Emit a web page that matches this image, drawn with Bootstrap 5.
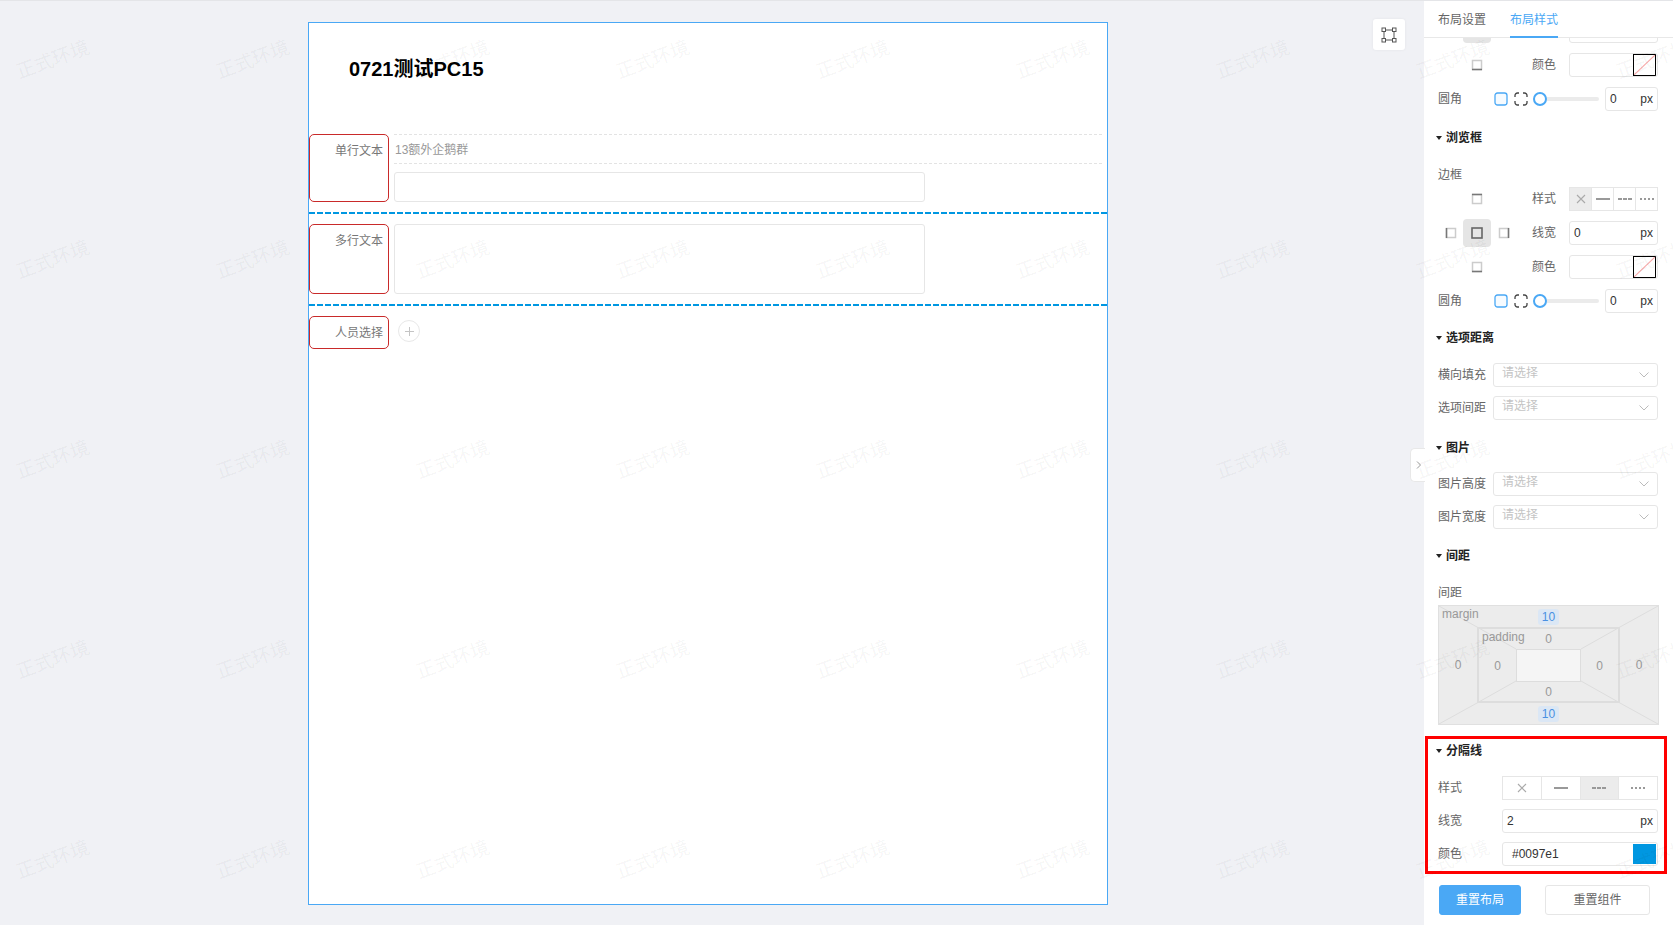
<!DOCTYPE html>
<html lang="zh-CN">
<head>
  <meta charset="UTF-8" />
  <meta name="viewport" content="width=device-width, initial-scale=1" />
  <title>布局样式</title>
  <link href="https://cdn.jsdelivr.net/npm/bootstrap@5.3.2/dist/css/bootstrap.min.css" rel="stylesheet">
  <style>
    html, body { height: 100%; }
    body {
      font-family: "Liberation Sans", "Noto Sans CJK SC", sans-serif;
      font-size: 12px;
      color: #555;
      background: #f0f1f5;
      overflow: hidden;
    }
    .page-wrap { height: 925px; border-top: 1px solid #e4e5e8; }

    /* canvas */
    .canvas-area { width: 1424px; padding: 21px 0 0 308px; }
    .form-sheet { width: 800px; height: 883px; background: #fff; border: 1px solid #4aa8f5; }
    .sheet-title { height: 111px; padding: 34px 0 0 40px; font-size: 20px; line-height: 24px; font-weight: 700; color: #000; margin: 0; }
    .field-label { width: 80px; flex: none; border: 1px solid #c92a2a; border-radius: 5px; padding: 7px 5px 0 0; text-align: right; line-height: 18px; color: #777; }
    .field-row { padding-right: 5px; gap: 5px; }
    .h-68 { height: 68px; }
    .h-69 { height: 70px; }
    .h-33 { height: 33px; }
    .desc-line { height: 30px; border-top: 1px dashed #e3e3e3; border-bottom: 1px dashed #e3e3e3; line-height: 30px; color: #999; padding-left: 1px; }
    .text-box { width: 531px; height: 30px; margin-top: 8px; border: 1px solid #e6e6e6; border-radius: 3px; }
    .text-area { height: 70px; margin-top: 0; }
    .row-split { height: 2px; margin: 10px 0; background: repeating-linear-gradient(90deg, #0097e1 0 6px, transparent 6px 8px); }
    .add-person { width: 22px; height: 22px; margin: 4px 0 0 4px; border: 1px solid #e8e8e8; border-radius: 50%; }
    .frame-tool { top: 18px; left: 1373px; width: 32px; height: 31px; background: #fff; border-radius: 3px; box-shadow: 0 0 3px rgba(0,0,0,.06); }
    .side-handle { top: 447px; left: 1410px; width: 15px; height: 34px; background: #fff; border: 1px solid #e8e8e8; border-right: 0; border-radius: 5px 0 0 5px; color: #999; z-index: 2; }

    /* right panel */
    .side-panel { width: 249px; flex: none; background: #fff; overflow: hidden; }
    .panel-tabs { height: 37px; gap: 24px; padding-left: 14px; border-bottom: 1px solid #e8e8e8; }
    .panel-tabs .nav-link { padding: 0; height: 37px; line-height: 38px; font-size: 12px; color: #666; border-bottom: 2px solid transparent; }
    .panel-tabs .nav-link.active { color: #4aa8f5; border-bottom-color: #4aa8f5; }
    .panel-body { padding: 0 15px 0 14px; height: 887px; overflow: hidden; }
    .panel-body > * { flex-shrink: 0; }
    .rw { height: 24px; margin-bottom: 10px; line-height: 24px; color: #666; white-space: nowrap; }
    .rw-tight { margin-bottom: 9px; }
    .first-rw { margin-top: -19px; }
    .fld { height: 24px; border: 1px solid #e6e6e6; border-radius: 3px; background: #fff; color: #333; padding: 0 4px; line-height: 22px; position: relative; overflow: hidden; }
    .ph { color: #c4c4c4; padding-left: 4px; line-height: 20px; margin-bottom: 4px; }
    .swatch { position: absolute; top: 0; right: 1px; bottom: 0; width: 23px; border: 1px solid #000; }
    .swatch-blue { background: #0097e1; border: 0; right: 1px; top: 1px; bottom: 1px; }
    .w-edge { width: 78px; flex: none; }
    .w-gap { width: 16px; flex: none; }
    .w-lab { width: 37px; flex: none; }
    .w-lab-long { width: 55px; flex: none; }
    .w-lab-mid { width: 64px; flex: none; }
    .edge-pick { width: 28px; height: 28px; border-radius: 4px; }
    .edge-pick.on { background: #e5e5e5; }
    .edge-side { width: 25px; }
    .clip-pick { width: 28px; height: 24px; background: #e5e5e5; border-radius: 0 0 4px 4px; }
    .radius-icons { width: 39px; gap: 6px; margin-left: 32px; flex: none; }
    .slide-track { width: 66px; height: 4px; background: #ebebeb; border-radius: 2px; position: relative; margin-right: 6px; }
    .slide-knob { position: absolute; left: 0; top: -5px; width: 14px; height: 14px; background: #fff; border: 2px solid #4aa8f5; border-radius: 50%; }
    .fld-num { width: 53px; flex: none; }
    .sec-head { height: 20px; line-height: 20px; margin-left: -2px; font-weight: 700; color: #222; }
    .sec-head::before { content: ""; width: 0; height: 0; margin-right: 4px; border-left: 3px solid transparent; border-right: 3px solid transparent; border-top: 4px solid #222; }
    .mt-7px { margin-top: 7px; }
    .mt-5px { margin-top: 5px; }
    .mt-9px { margin-top: 9px; }
    .mt-8px { margin-top: 8px; }
    .mt-17px { margin-top: 17px; }
    .mb-14px { margin-bottom: 14px; }
    .mb-15px { margin-bottom: 15px; }
    .sub-label { height: 20px; line-height: 20px; color: #666; }
    .sub-label-gap { margin-top: 17px; margin-bottom: 2px; }
    .seg-group { height: 24px; border: 1px solid #e6e6e6; }
    .seg-cell { flex: 1 1 0; border-left: 1px solid #e6e6e6; }
    .seg-cell:first-child { border-left: 0; }
    .seg-cell.on { background: #ececec; }
    .seg-line { width: 14px; height: 2px; background: #999; }
    .seg-line.ds { background: repeating-linear-gradient(90deg, #999 0 4px, transparent 4px 5px); }
    .seg-line.dt { background: repeating-linear-gradient(90deg, #999 0 2px, transparent 2px 4px); }

    .space-box { width: 221px; height: 120px; margin-top: 2px; background: #ececec; border: 1px solid #e0e0e0; display: grid; grid-template-columns: 38px 143px 38px; grid-template-rows: 21px 76px 21px; color: #999; position: relative; }
    .space-inner { display: grid; grid-template-columns: 37px 65px 37px; grid-template-rows: 20px 33px 19px; border: 2px solid #ddd; position: relative; }
    .space-core { background: #f5f5f5; border: 1px solid #ddd; }
    .space-lines { position: absolute; inset: 0; width: 100%; height: 100%; }
    .space-cell { display: flex; align-items: center; justify-content: center; position: relative; }
    .space-tag { position: absolute; left: 3px; top: 0; line-height: 16px; }
    .space-pill { background: #dbe7f5; color: #4a90e2; border-radius: 3px; padding: 0 4px; line-height: 16px; }

    .split-box { width: 242px; height: 138px; margin: 11px 0 0 -13px; border: 3px solid #f00; padding: 2px 6px 0 10px; }
    .split-gap { margin-top: 15px; }
    .mb-9px { margin-bottom: 9px; }
    .hex-val { padding-left: 5px; }
    .foot-btns { margin: 11px 0 0 1px; }
    .reset-main, .reset-sub { height: 30px; padding: 0; font-size: 12px; border-radius: 3px; line-height: 28px; }
    .reset-main { width: 82px; background: #4aa8f5; border: 1px solid #4aa8f5; color: #fff; margin-right: 24px; }
    .reset-sub { width: 105px; background: #fff; border: 1px solid #e6e6e6; color: #666; }

    /* watermark */
    .mark-layer { inset: 0; overflow: hidden; pointer-events: none; z-index: 5; }
    .mark-grid { display: grid; grid-template-columns: repeat(9, 200px); grid-auto-rows: 200px; margin: -41px 0 0 -47px; }
    .mark-item { display: flex; align-items: center; justify-content: center; font-size: 19px; color: rgba(0,0,0,.055); transform: rotate(-20deg); white-space: nowrap; }
  </style>
</head>

<body>
<svg width="0" height="0" class="position-absolute">
  <defs>
    <symbol id="edge-top" viewBox="0 0 12 12"><rect x="1.5" y="1.5" width="9" height="9" fill="none" stroke="#ccc" stroke-width="1.5"/><path d="M1 1.5h10" stroke="#777" stroke-width="1.5"/></symbol>
    <symbol id="edge-bottom" viewBox="0 0 12 12"><rect x="1.5" y="1.5" width="9" height="9" fill="none" stroke="#ccc" stroke-width="1.5"/><path d="M1 10.5h10" stroke="#777" stroke-width="1.5"/></symbol>
    <symbol id="edge-left" viewBox="0 0 12 12"><rect x="1.5" y="1.5" width="9" height="9" fill="none" stroke="#ccc" stroke-width="1.5"/><path d="M1.5 1v10" stroke="#777" stroke-width="1.5"/></symbol>
    <symbol id="edge-right" viewBox="0 0 12 12"><rect x="1.5" y="1.5" width="9" height="9" fill="none" stroke="#ccc" stroke-width="1.5"/><path d="M10.5 1v10" stroke="#777" stroke-width="1.5"/></symbol>
    <symbol id="edge-all" viewBox="0 0 12 12"><rect x="1" y="1" width="10" height="10" fill="none" stroke="#666" stroke-width="1.6"/></symbol>
    <symbol id="corner-one" viewBox="0 0 14 14"><rect x="1" y="1" width="12" height="12" rx="2.5" fill="#f6fbff" stroke="#4aa8f5" stroke-width="1.3"/></symbol>
    <symbol id="corner-each" viewBox="0 0 14 14"><path d="M1 5V3.5A2.5 2.5 0 0 1 3.500 1H5M9 1h1.500A2.500 2.500 0 0 1 13 3.500V5M13 9v1.500A2.500 2.500 0 0 1 10.500 13H9M5 13H3.500A2.500 2.500 0 0 1 1 10.500V9" fill="none" stroke="#444" stroke-width="1.3"/></symbol>
    <symbol id="no-line" viewBox="0 0 10 10"><path d="M1 1l8 8M9 1l-8 8" stroke="#aaa" stroke-width="1.100"/></symbol>
    <symbol id="chev" viewBox="0 0 10 6"><path d="M.5.500 5 5l4.500-4.500" fill="none" stroke="#bbb" stroke-width="1"/></symbol>
    <symbol id="no-color" viewBox="0 0 23 23" preserveAspectRatio="none"><path d="M0 23 23 0" stroke="#f7a8a8" stroke-width="1.200"/></symbol>
  </defs>
</svg>

<div class="page-wrap d-flex position-relative">
  <main class="canvas-area">
    <div class="form-sheet">
      <h1 class="sheet-title">0721测试PC15</h1>

      <div class="d-flex field-row h-68">
        <div class="field-label">单行文本</div>
        <div class="flex-grow-1">
          <div class="desc-line">13额外企鹅群</div>
          <div class="text-box"></div>
        </div>
      </div>
      <div class="row-split"></div>

      <div class="d-flex field-row h-69">
        <div class="field-label">多行文本</div>
        <div class="flex-grow-1">
          <div class="text-box text-area"></div>
        </div>
      </div>
      <div class="row-split"></div>

      <div class="d-flex field-row h-33">
        <div class="field-label">人员选择</div>
        <div class="add-person d-flex align-items-center justify-content-center">
          <svg width="9" height="9" viewBox="0 0 9 9"><path d="M4.500 0v9M0 4.500h9" stroke="#c4c4c4"/></svg>
        </div>
      </div>
    </div>
  </main>

  <div class="frame-tool position-absolute d-flex align-items-center justify-content-center">
    <svg width="16" height="16" viewBox="0 0 16 16" fill="none" stroke="#555" stroke-width="1"><path d="M3 4.500v7M13 4.500v7M4.500 3h7M4.500 13h7"/><rect x="1" y="1" width="3.500" height="3.500"/><rect x="11.500" y="1" width="3.500" height="3.500"/><rect x="1" y="11.500" width="3.500" height="3.500"/><rect x="11.500" y="11.500" width="3.500" height="3.500"/></svg>
  </div>
  <div class="side-handle position-absolute d-flex align-items-center justify-content-center">
    <svg width="5" height="8" viewBox="0 0 5 8"><path d="M1 .5 4.500 4 1 7.500" fill="none" stroke="#999"/></svg>
  </div>

  <aside class="side-panel">
    <nav class="nav panel-tabs">
      <a class="nav-link" href="#">布局设置</a>
      <a class="nav-link active" href="#">布局样式</a>
    </nav>

    <div class="panel-body d-flex flex-column">
      <!-- 上面的边框设置已滚出可视区 -->
      <div class="rw first-rw d-flex">
        <div class="w-edge d-flex justify-content-center"><span class="clip-pick"></span></div>
        <div class="w-gap"></div><div class="w-lab"></div>
        <div class="fld flex-grow-1"></div>
      </div>
      <div class="rw d-flex">
        <div class="w-edge d-flex justify-content-center align-items-center"><svg width="12" height="12"><use href="#edge-bottom"/></svg></div>
        <div class="w-gap"></div><div class="w-lab">颜色</div>
        <div class="fld flex-grow-1"><span class="swatch"><svg class="d-block w-100 h-100"><use href="#no-color"/></svg></span></div>
      </div>
      <div class="rw d-flex align-items-center">
        <div class="flex-shrink-0">圆角</div>
        <div class="radius-icons d-flex align-items-center">
          <svg width="14" height="14"><use href="#corner-one"/></svg>
          <svg width="14" height="14"><use href="#corner-each"/></svg>
        </div>
        <div class="slide-track flex-shrink-0"><span class="slide-knob"></span></div>
        <div class="fld fld-num d-flex justify-content-between"><span>0</span><span>px</span></div>
      </div>

      <div class="sec-head d-flex align-items-center mt-7px">浏览框</div>
      <div class="sub-label sub-label-gap">边框</div>
      <div class="rw d-flex">
        <div class="w-edge d-flex justify-content-center align-items-center"><svg width="12" height="12"><use href="#edge-top"/></svg></div>
        <div class="w-gap"></div><div class="w-lab">样式</div>
        <div class="seg-group d-flex flex-grow-1">
          <span class="seg-cell on d-flex align-items-center justify-content-center"><svg width="10" height="10"><use href="#no-line"/></svg></span>
          <span class="seg-cell d-flex align-items-center justify-content-center"><span class="seg-line"></span></span>
          <span class="seg-cell d-flex align-items-center justify-content-center"><span class="seg-line ds"></span></span>
          <span class="seg-cell d-flex align-items-center justify-content-center"><span class="seg-line dt"></span></span>
        </div>
      </div>
      <div class="rw d-flex">
        <div class="w-edge d-flex justify-content-center align-items-center">
          <span class="edge-side d-flex justify-content-center"><svg width="12" height="12"><use href="#edge-left"/></svg></span>
          <span class="edge-pick on d-flex align-items-center justify-content-center flex-shrink-0"><svg width="12" height="12"><use href="#edge-all"/></svg></span>
          <span class="edge-side d-flex justify-content-center"><svg width="12" height="12"><use href="#edge-right"/></svg></span>
        </div>
        <div class="w-gap"></div><div class="w-lab">线宽</div>
        <div class="fld flex-grow-1 d-flex justify-content-between"><span>0</span><span>px</span></div>
      </div>
      <div class="rw d-flex">
        <div class="w-edge d-flex justify-content-center align-items-center"><svg width="12" height="12"><use href="#edge-bottom"/></svg></div>
        <div class="w-gap"></div><div class="w-lab">颜色</div>
        <div class="fld flex-grow-1"><span class="swatch"><svg class="d-block w-100 h-100"><use href="#no-color"/></svg></span></div>
      </div>
      <div class="rw d-flex align-items-center">
        <div class="flex-shrink-0">圆角</div>
        <div class="radius-icons d-flex align-items-center">
          <svg width="14" height="14"><use href="#corner-one"/></svg>
          <svg width="14" height="14"><use href="#corner-each"/></svg>
        </div>
        <div class="slide-track flex-shrink-0"><span class="slide-knob"></span></div>
        <div class="fld fld-num d-flex justify-content-between"><span>0</span><span>px</span></div>
      </div>

      <div class="sec-head d-flex align-items-center mt-5px mb-15px">选项距离</div>
      <div class="rw rw-tight d-flex">
        <div class="w-lab-long">横向填充</div>
        <div class="fld flex-grow-1 d-flex justify-content-between align-items-center"><span class="ph">请选择</span><svg class="me-1" width="10" height="6"><use href="#chev"/></svg></div>
      </div>
      <div class="rw rw-tight d-flex">
        <div class="w-lab-long">选项间距</div>
        <div class="fld flex-grow-1 d-flex justify-content-between align-items-center"><span class="ph">请选择</span><svg class="me-1" width="10" height="6"><use href="#chev"/></svg></div>
      </div>

      <div class="sec-head d-flex align-items-center mt-9px mb-14px">图片</div>
      <div class="rw rw-tight d-flex">
        <div class="w-lab-long">图片高度</div>
        <div class="fld flex-grow-1 d-flex justify-content-between align-items-center"><span class="ph">请选择</span><svg class="me-1" width="10" height="6"><use href="#chev"/></svg></div>
      </div>
      <div class="rw rw-tight d-flex">
        <div class="w-lab-long">图片宽度</div>
        <div class="fld flex-grow-1 d-flex justify-content-between align-items-center"><span class="ph">请选择</span><svg class="me-1" width="10" height="6"><use href="#chev"/></svg></div>
      </div>

      <div class="sec-head d-flex align-items-center mt-8px">间距</div>
      <div class="sub-label mt-17px">间距</div>
      <div class="space-box">
        <svg class="space-lines" viewBox="0 0 219 118" preserveAspectRatio="none" stroke="#ddd" fill="none"><path d="M0 0 38 21M219 0 181 21M0 118 38 97M219 118 181 97M38 21 77 43M181 21 142 43M38 97 77 75M181 97 142 75"/></svg>
        <div class="space-cell"><span class="space-tag">margin</span></div>
        <div class="space-cell"><span class="space-pill">10</span></div>
        <div class="space-cell"></div>
        <div class="space-cell">0</div>
        <div class="space-inner">
          <div class="space-cell"><span class="space-tag">padding</span></div>
          <div class="space-cell">0</div>
          <div class="space-cell"></div>
          <div class="space-cell">0</div>
          <div class="space-core"></div>
          <div class="space-cell">0</div>
          <div class="space-cell"></div>
          <div class="space-cell">0</div>
          <div class="space-cell"></div>
        </div>
        <div class="space-cell">0</div>
        <div class="space-cell"></div>
        <div class="space-cell"><span class="space-pill">10</span></div>
        <div class="space-cell"></div>
      </div>

      <div class="split-box">
        <div class="sec-head d-flex align-items-center">分隔线</div>
        <div class="rw mb-9px split-gap d-flex">
          <div class="w-lab-mid">样式</div>
          <div class="seg-group d-flex flex-grow-1">
            <span class="seg-cell d-flex align-items-center justify-content-center"><svg width="10" height="10"><use href="#no-line"/></svg></span>
            <span class="seg-cell d-flex align-items-center justify-content-center"><span class="seg-line"></span></span>
            <span class="seg-cell on d-flex align-items-center justify-content-center"><span class="seg-line ds"></span></span>
            <span class="seg-cell d-flex align-items-center justify-content-center"><span class="seg-line dt"></span></span>
          </div>
        </div>
        <div class="rw mb-9px d-flex">
          <div class="w-lab-mid">线宽</div>
          <div class="fld flex-grow-1 d-flex justify-content-between"><span>2</span><span>px</span></div>
        </div>
        <div class="rw d-flex">
          <div class="w-lab-mid">颜色</div>
          <div class="fld flex-grow-1"><span class="hex-val">#0097e1</span><span class="swatch swatch-blue"></span></div>
        </div>
      </div>

      <div class="foot-btns d-flex">
        <button type="button" class="btn reset-main">重置布局</button>
        <button type="button" class="btn reset-sub">重置组件</button>
      </div>
    </div>
  </aside>

  <div class="mark-layer position-absolute"><div class="mark-grid" id="markGrid"></div></div>
</div>

<script>
  // 水印：9 列 5 行
  const markGrid = document.getElementById('markGrid');
  for (let i = 0; i < 45; i++) {
    const item = document.createElement('div');
    item.className = 'mark-item';
    item.textContent = '正式环境';
    markGrid.appendChild(item);
  }
</script>
<script src="https://cdn.jsdelivr.net/npm/bootstrap@5.3.2/dist/js/bootstrap.bundle.min.js"></script>
</body>
</html>
